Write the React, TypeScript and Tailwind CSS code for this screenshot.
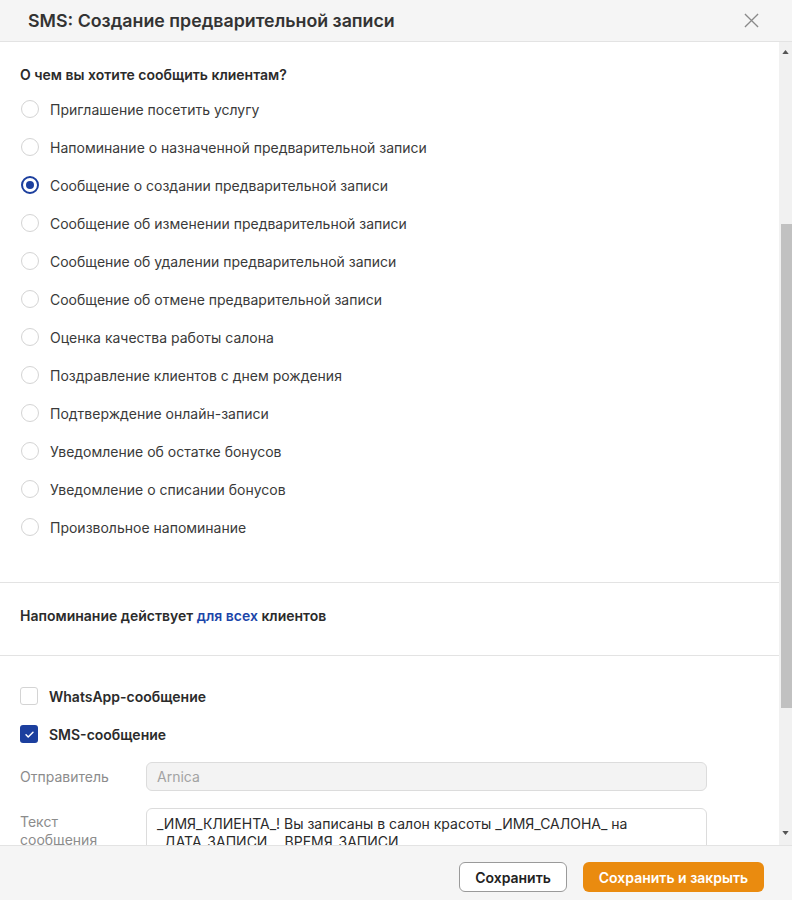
import { useState } from "react";

// ── Options for the message type radio list
const OPTIONS = [
  "Приглашение посетить услугу",
  "Напоминание о назначенной предварительной записи",
  "Сообщение о создании предварительной записи",
  "Сообщение об изменении предварительной записи",
  "Сообщение об удалении предварительной записи",
  "Сообщение об отмене предварительной записи",
  "Оценка качества работы салона",
  "Поздравление клиентов с днем рождения",
  "Подтверждение онлайн-записи",
  "Уведомление об остатке бонусов",
  "Уведомление о списании бонусов",
  "Произвольное напоминание",
];

function Radio({ checked }: { checked: boolean }) {
  return (
    <span
      className={
        checked
          ? "w-[18px] h-[18px] rounded-full border-2 border-[#1c3f9e] flex items-center justify-center shrink-0"
          : "w-[18px] h-[18px] rounded-full border border-[#d4d4d4] bg-white shrink-0"
      }
    >
      {checked && <span className="w-[8px] h-[8px] rounded-full bg-[#1c3f9e]" />}
    </span>
  );
}

function Checkbox({ checked }: { checked: boolean }) {
  return checked ? (
    <span className="w-[18px] h-[18px] rounded-[3px] bg-[#1c3f9e] flex items-center justify-center shrink-0">
      <svg viewBox="0 0 12 12" className="w-[11px] h-[11px]" fill="none" stroke="white" strokeWidth={1.6}>
        <path d="M2.2 6.3l2.4 2.4 5.2-5.2" strokeLinecap="round" strokeLinejoin="round" />
      </svg>
    </span>
  ) : (
    <span className="w-[18px] h-[18px] rounded-[3px] border border-[#d4d4d4] bg-white shrink-0" />
  );
}

export default function App() {
  const [selected, setSelected] = useState(2);

  return (
    <div className="w-[792px] h-[900px] flex flex-col bg-white overflow-hidden font-['Inter',sans-serif] text-[#333]">
      {/* ── Header ── */}
      <div className="h-[42px] shrink-0 bg-[#f5f5f5] border-b border-[#e3e3e3] flex items-center justify-between pl-[28px] pr-[33px]">
        <h1 className="text-[17.8px] font-semibold text-[#333] leading-none">SMS: Создание предварительной записи</h1>
        <svg viewBox="0 0 16 16" className="w-[15px] h-[15px]" fill="none" stroke="#8a8a8a" strokeWidth={1.4}>
          <path d="M1 1l14 14M15 1L1 15" />
        </svg>
      </div>

      {/* ── Body with scrollbar ── */}
      <div className="flex-1 min-h-0 flex">
        <div className="flex-1 overflow-hidden">
          <div className="pt-[24px] pb-[36px] px-[20px]">
            <div className="text-[14px] font-semibold leading-[18px] text-[#2b2b2b] mb-[6px]">
              О чем вы хотите сообщить клиентам?
            </div>
            {OPTIONS.map((label, i) => (
              <button
                key={label}
                onClick={() => setSelected(i)}
                className="h-[38px] flex items-center gap-[11px] pl-[1px] w-full text-left"
              >
                <Radio checked={selected === i} />
                <span className="text-[14px] text-[#3a3a3a]">{label}</span>
              </button>
            ))}
          </div>

          <div className="border-t border-[#e3e3e3] pt-[24px] pb-[30px] px-[20px]">
            <div className="text-[14px] font-semibold leading-[18px] text-[#2b2b2b]">
              Напоминание действует <span className="text-[#1b45a9]">для всех</span> клиентов
            </div>
          </div>

          <div className="border-t border-[#e3e3e3] pt-[21px] px-[20px] pr-[72px]">
            <div className="h-[38px] flex items-center gap-[11px]">
              <Checkbox checked={false} />
              <span className="text-[14px] font-semibold text-[#2b2b2b]">WhatsApp-сообщение</span>
            </div>
            <div className="h-[38px] flex items-center gap-[11px]">
              <Checkbox checked={true} />
              <span className="text-[14px] font-semibold text-[#2b2b2b]">SMS-сообщение</span>
            </div>

            <div className="mt-[9px] flex items-center">
              <div className="w-[126px] shrink-0 text-[14px] text-[#8c8c8c]">Отправитель</div>
              <div className="flex-1 h-[29px] rounded-[6px] border border-[#dcdcdc] bg-[#f3f3f3] px-[10px] flex items-center text-[14px] text-[#a3a3a3]">
                Arnica
              </div>
            </div>

            <div className="mt-[17px] flex items-start">
              <div className="w-[126px] shrink-0 pt-[5px] text-[14px] leading-[18px] text-[#8c8c8c]">
                Текст
                <br />
                сообщения
              </div>
              <div className="flex-1 h-[80px] rounded-[6px] border border-[#dcdcdc] bg-white px-[10px] pt-[6px] text-[14px] leading-[18px] text-[#2b2b2b]">
                _ИМЯ_КЛИЕНТА_! Вы записаны в салон красоты _ИМЯ_САЛОНА_ на
                <br />
                _ДАТА_ЗАПИСИ_ _ВРЕМЯ_ЗАПИСИ_
              </div>
            </div>
          </div>
        </div>

        {/* ── Scrollbar ── */}
        <div className="w-[13px] shrink-0 bg-[#f1f1f1] flex flex-col items-end">
          <div className="h-[12px] w-full flex items-end justify-center">
            <svg viewBox="0 0 8 5" className="w-[7px] h-[4px]" fill="#555">
              <path d="M4 0l4 5H0z" />
            </svg>
          </div>
          <div className="mt-[170px] w-[11px] h-[484px] bg-[#c1c1c1]" />
          <div className="flex-1" />
          <div className="h-[14px] w-full flex items-start justify-center">
            <svg viewBox="0 0 8 5" className="w-[7px] h-[4px]" fill="#555">
              <path d="M0 0h8L4 5z" />
            </svg>
          </div>
        </div>
      </div>

      {/* ── Footer ── */}
      <div className="h-[55px] shrink-0 bg-[#f5f5f5] border-t border-[#e3e3e3] flex items-start justify-end gap-[16px] pt-[16px] pr-[28px]">
        <button className="h-[30px] w-[108px] rounded-[6px] border border-[#9a9a9a] bg-white text-[14px] font-semibold text-[#222]">
          Сохранить
        </button>
        <button className="h-[30px] w-[181px] rounded-[6px] bg-[#ea8b0f] text-[14px] font-semibold text-white">
          Сохранить и закрыть
        </button>
      </div>
    </div>
  );
}
